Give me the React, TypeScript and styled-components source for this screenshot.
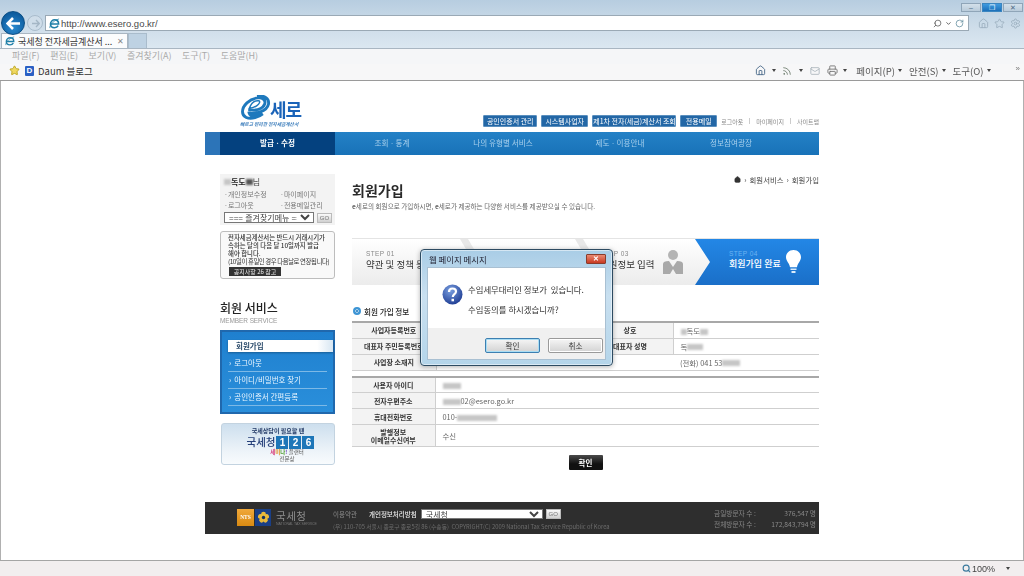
import React from 'react';
import styled, { createGlobalStyle } from 'styled-components';
import { Home, Star, Settings, Search, RotateCw, ChevronDown, Rss, Mail, Printer } from 'lucide-react';

const KR = '"Noto Sans CJK KR", "Liberation Sans", sans-serif';

const Global = createGlobalStyle`
  html, body { margin: 0; padding: 0; background: #fff; overflow: hidden; }
  * { box-sizing: border-box; }
  body { font-family: ${KR}; }
`;

const Frame = styled.div`
  width: 1024px; height: 576px; display: flex; flex-direction: column; overflow: hidden;
  filter: blur(0.3px);
`;

/* ---------- browser chrome ---------- */
const TopArea = styled.div`
  height: 49px; flex: none; display: flex; flex-direction: column;
  background: linear-gradient(#b7cde0, #cfdeea 60%, #dbe7f1);
  border-bottom: 1px solid #a9b6c2;
`;
const WindowRow = styled.div`
  height: 14px; padding: 3px 1px 0 0; display: flex; justify-content: flex-end; gap: 1px;
`;
const WinBtn = styled.div<{ $kind?: 'max' | 'plain' }>`
  width: 20px; height: 9px; border: 1px solid #8fa5b8; font: 7px/7px "Liberation Sans", sans-serif; text-align: center;
  color: ${p => (p.$kind === 'max' ? '#e6f3fc' : '#4d6b85')};
  background: ${p => (p.$kind === 'max' ? 'linear-gradient(#3f9be0, #1b6fb9)' : 'linear-gradient(#d3e0ea, #b9cbda)')};
  border-color: ${p => (p.$kind === 'max' ? '#3a85c0' : '#8fa5b8')};
`;
const NavRow = styled.div`
  height: 20px; display: flex; align-items: center; padding-left: 1px; position: relative; z-index: 2;
`;
const BackBtn = styled.div`
  width: 24px; height: 24px; border-radius: 50%; flex: none; display: flex; align-items: center; justify-content: center;
  background: radial-gradient(circle at 50% 70%, #2a8ad0, #0d5c9e 75%);
  border: 1px solid #0c4f85;
`;
const ForwardBtn = styled.div`
  width: 16px; height: 16px; border-radius: 50%; margin-left: 2px; flex: none; display: flex; align-items: center; justify-content: center;
  background: #cfdde9; border: 1px solid #a9bccc;
`;
const AddressBox = styled.div`
  width: 924px; height: 16px; margin-left: 2px; flex: none; display: flex; align-items: center; padding: 0 4px 0 3px;
  background: #fff; border: 1px solid #9aa9b5;
`;
const Url = styled.span`
  font: 9.5px "Liberation Sans", sans-serif; color: #4a4a4a; margin-left: 1px; flex: 1;
`;
const AddressTools = styled.div`
  display: flex; align-items: center; gap: 3px; color: #555;
`;
const ToolIcons = styled.div`
  display: flex; align-items: center; gap: 5px; margin-left: 9px; color: #9db0bf;
`;
const TabRow = styled.div`
  height: 15px; display: flex; align-items: flex-end; padding-left: 1px;
`;
const Tab = styled.div`
  width: 127px; height: 15px; background: #fbfcfd; border: 1px solid #a9b6c2; border-bottom: none; display: flex; align-items: center; padding: 0 3px;
  font-size: 9px; color: #333; white-space: nowrap;
`;
const TabLabel = styled.span` margin-left: 3px; flex: 1; `;
const TabClose = styled.span` color: #888; font: 8px "Liberation Sans", sans-serif; `;
const NewTab = styled.div`
  width: 19px; height: 15px; background: #bed2e3; border: 1px solid #a9bccc; border-bottom: none;
`;
const MenuRow = styled.div`
  height: 15px; flex: none; background: #f5f6f8; display: flex; align-items: center; padding: 0 0 2px 12px; gap: 10.5px;
  font-size: 9px; color: #a9a9a9; white-space: nowrap;
`;
const FavRow = styled.div`
  height: 17px; flex: none; background: #f7f7f8; display: flex; align-items: center; padding: 0 4px 3px 9px;
  font-size: 9.5px; color: #333; border-bottom: 1px solid #9a9a9a; white-space: nowrap;
`;
const FavBadge = styled.span`
  width: 9px; height: 10px; margin-left: 5px; margin-right: 4px; background: #2a5fc4; color: #fff; border-radius: 1px;
  font: bold 8px/10px "Liberation Sans", sans-serif; text-align: center; flex: none;
`;
const FavTools = styled.div`
  margin-left: auto; display: flex; align-items: center; color: #555;
`;
const Caret = styled.span<{ $gap?: number }>`
  width: 0; height: 0; border: 2.5px solid transparent; border-top: 3px solid #444; border-bottom: none;
  margin: 0 ${p => p.$gap ?? 6}px 0 ${p => p.$gap ?? 6}px;
`;
const ToolText = styled.span` margin-left: 4px; `;
const More = styled.span` margin-left: 22px; margin-bottom: 4px; font: 8px "Liberation Sans", sans-serif; color: #777; `;

const Viewport = styled.div`
  flex: 1; min-height: 0; overflow: hidden; background: #fff; border-left: 1px solid #b0b0b0; border-right: 1px solid #b0b0b0; position: relative;
`;

const StatusBar = styled.div`
  height: 16px; flex: none; background: #f2eeef; border-top: 1px solid #a5a5a5; display: flex; align-items: center; justify-content: flex-end;
  padding-right: 3px; font: 9px "Liberation Sans", sans-serif; color: #444;
`;
const StatusIcon = styled.span` color: #3b7a9e; display: flex; margin-right: 1px; `;

/* ---------- site ---------- */
const Site = styled.div`
  width: 614px; margin: 0 auto; display: flex; flex-direction: column;
`;
const Header = styled.header`
  height: 51px; display: flex; align-items: flex-end; justify-content: space-between; padding: 0 0 5px 35px;
`;
const Logo = styled.div`
  width: 63px; height: 33px; display: flex; flex-direction: column; margin-bottom: -1px;
`;
const LogoTop = styled.div` display: flex; align-items: flex-end; height: 26px; `;
const LogoName = styled.span`
  font-family: "Liberation Sans", "Noto Sans CJK KR", sans-serif;
  font-size: 18px; font-weight: 700; line-height: 19px; color: #1a63b8; letter-spacing: -1px; margin-left: -1px;
`;
const LogoSub = styled.span`
  font-size: 4.7px; font-weight: 700; font-style: italic; color: #3a7cbb; white-space: nowrap; line-height: 7px;
`;
const HeaderRight = styled.div` display: flex; align-items: center; `;
const UtilBtn = styled.span<{ $w: number }>`
  width: ${p => p.$w}px; height: 12px; background: #2367a6; border: 1px solid #5a8fbe; border-radius: 1px; margin-right: 4px;
  font-size: 7px; line-height: 10px; color: #fff; text-align: center; white-space: nowrap;
`;
const UtilLink = styled.span`
  font-size: 6px; color: #8a8a8a; white-space: nowrap;
`;
const UtilSep = styled.span` width: 1px; height: 6px; background: #ccc; margin: 0 6px; `;

const Nav = styled.nav`
  height: 23px; display: flex; background: linear-gradient(#2481c6, #1872b8); padding-left: 15px;
  box-shadow: inset 15px 0 0 #2c74b8;
`;
const NavItem = styled.div<{ $w: number; $active?: boolean }>`
  width: ${p => p.$w}px; text-align: center; font-size: 7.6px; line-height: 22px; white-space: nowrap;
  color: ${p => (p.$active ? '#fff' : '#a8d0ec')};
  font-weight: ${p => (p.$active ? 700 : 400)};
  background: ${p => (p.$active ? '#04417f' : 'transparent')};
`;
const Body = styled.div`
  height: 347px; display: flex; padding: 19px 0 0 15px; gap: 17px;
`;
const Side = styled.aside` width: 115px; flex: none; display: flex; flex-direction: column; `;
const UserBox = styled.div`
  height: 51px; background: #f3f3f3; padding: 3px 3px 0 4px; font-size: 7px; color: #777;
`;
const UserName = styled.div` font-size: 8px; line-height: 10px; color: #444; display: flex; align-items: center; `;
const Blur = styled.span<{ $w: number; $dark?: boolean }>`
  display: inline-block; width: ${p => p.$w}px; height: 6px; background: ${p => (p.$dark ? '#555' : '#c6c6c6')}; filter: blur(1.3px); vertical-align: middle;
`;
const BoldName = styled.b` color: #222; font-size: 8px; `;
const UserLinks = styled.div`
  display: grid; grid-template-columns: 56px 1fr; row-gap: 0; line-height: 11px; margin-top: 2px; white-space: nowrap;
`;
const SelectRow = styled.div` display: flex; align-items: center; gap: 3px; margin-top: 1px; `;
const FavSelect = styled.select<{ $w: number; $h?: number }>`
  width: ${p => p.$w}px; height: ${p => p.$h ?? 11}px; padding: 0; border: 1px solid #777; border-radius: 0; background: #fff;
  font: 8px/9px "Liberation Sans", "Noto Sans CJK KR", sans-serif; color: #444; outline: none;
`;
const GoBtn = styled.span`
  width: 15px; height: 10px; background: linear-gradient(#fafafa, #d0d0d0); border: 1px solid #bbb; font: 6px/8px "Liberation Sans", sans-serif; color: #777; text-align: center; flex: none;
`;
const FooterGo = styled(GoBtn)` margin-left: 3px; `;
const Notice = styled.div`
  height: 48px; margin-top: 6px; border: 1px solid #bdbdbd; border-radius: 3px; background: #f9f9f9; padding: 2px 0 0 7px;
  font-size: 6.4px; line-height: 8px; color: #333; white-space: nowrap;
`;
const NoticeBold = styled.div` font-weight: 500; `;
const NoticeFine = styled.div` letter-spacing: -0.42px; `;
const NoticeTag = styled.span`
  display: block; width: 52px; height: 9px; margin: 1px 0 0 1px; background: #333; color: #eee; font-size: 6px; line-height: 9px; text-align: center;
`;
const SideTitle = styled.h2`
  margin: 21px 0 0; font-size: 12px; line-height: 15px; font-weight: 500; color: #222;
`;
const SideSub = styled.div`
  font: 6.5px/9px "Liberation Sans", sans-serif; color: #999; margin-top: 1px; letter-spacing: -0.1px;
`;
const SideMenu = styled.div`
  height: 84px; margin-top: 5px; background: linear-gradient(#1f80cf, #2a8fdb); border: 2px solid #2068ad; padding: 8px 0 0 6px; display: flex; flex-direction: column;
`;
const SideActive = styled.div`
  height: 12px; background: linear-gradient(90deg, #fff 85%, #d7e6f2); padding-left: 8px; font-size: 7.5px; font-weight: 700; line-height: 12px; color: #2a4a6a; margin-bottom: 3px; box-shadow: 0 1px 2px rgba(0,0,0,.3);
`;
const SideItem = styled.div`
  height: 17px; margin-right: 6px; padding-left: 1px; border-bottom: 1px solid #7db9e6; font-size: 7.5px; line-height: 16px; color: #eaf6ff; white-space: nowrap;
  display: flex; gap: 3px;
`;
const Banner = styled.div`
  height: 42px; margin-top: 9px; margin-left: 1px; border-radius: 3px; border: 1px solid #c3d3e0; background: linear-gradient(#cddfee, #eef4f9 70%, #f8fbfd); display: flex; flex-direction: column; align-items: center; padding-top: 3px;
`;
const BannerLead = styled.div` font-size: 6px; font-weight: 700; line-height: 8px; color: #233a66; `;
const BannerMain = styled.div` display: flex; align-items: center; font-size: 10.5px; line-height: 14px; color: #26407a; font-weight: 500; margin-left: 5px; `;
const Digit = styled.span`
  width: 12px; height: 13px; margin-left: 1px; background: #1d76b8; color: #fff; font: bold 10px/13px "Liberation Sans", sans-serif; text-align: center;
`;
const Rainbow = styled.div` font-size: 5.5px; line-height: 7px; color: #555; margin-left: 18px; `;
const Tint = styled.b<{ $c: string }>` color: ${p => p.$c}; `;

const Main = styled.main` width: 467px; flex: none; display: flex; flex-direction: column; `;
const TitleRow = styled.div` height: 64px; display: flex; justify-content: space-between; flex: none; `;
const H1 = styled.h1` margin: 6px 0 0; font-size: 14px; line-height: 20px; font-weight: 700; color: #2a2a2a; `;
const Desc = styled.p` margin: 2px 0 0; font-size: 6.6px; line-height: 9px; color: #666; white-space: nowrap; `;
const Crumbs = styled.div` display: flex; align-items: center; height: 10px; font-size: 7.4px; color: #444; gap: 3px; white-space: nowrap; `;
const Steps = styled.div`
  height: 47px; flex: none; display: flex; background: linear-gradient(#ffffff, #f7f7f7 40%, #ececec); border-top: 1px solid #e4e4e4;
`;
const Step = styled.div<{ $w: number; $pad: number }>`
  width: ${p => p.$w}px; padding-left: ${p => p.$pad}px; position: relative; display: flex; align-items: center; gap: 8px;
`;
const Chevron = styled.svg`
  position: absolute; left: -5px; top: 0; width: 22px; height: 47px;
`;
const StepLabel = styled.div` font: 6.5px/9px "Liberation Sans", sans-serif; letter-spacing: .4px; color: #888; `;
const StepTitle = styled.div` font-size: 9.5px; line-height: 12px; color: #333; white-space: nowrap; `;
const StepText = styled.div` margin-bottom: 5px; `;
const StepDone = styled.div`
  flex: 1; padding-left: 34px; display: flex; align-items: center; gap: 5px;
  background: linear-gradient(#2387e6, #1a6fc8);
  clip-path: polygon(0 0, 100% 0, 100% 100%, 0 100%, 15px 50%);
`;
const DoneLabel = styled(StepLabel)` color: #6db4f2; `;
const DoneTitle = styled.div` font-size: 9px; font-weight: 500; line-height: 12px; color: #fff; white-space: nowrap; `;
const SectionHead = styled.div`
  display: flex; align-items: center; gap: 3px; margin-top: 21px; height: 10px; padding-left: 1px; font-size: 7.6px; font-weight: 500; color: #222;
`;
const SectionDot = styled.span`
  width: 8px; height: 8px; border-radius: 50%; background: #1775bd; border: 2px solid #3d95d5; box-shadow: inset 0 0 0 1px #cfe6f7;
`;
const Table = styled.table<{ $mt: number }>`
  width: 467px; margin-top: ${p => p.$mt}px; border-collapse: collapse; table-layout: fixed; border-top: 2px solid #a8a8a8; font-size: 7.4px;
`;
const Th = styled.th<{ $w?: number; $h?: number }>`
  width: ${p => (p.$w ? `${p.$w}px` : 'auto')}; height: ${p => p.$h ?? 16}px; padding: 0; background: #f3f3f3; font-weight: 700; font-size: 7px; line-height: 8px; color: #333; text-align: center;
  border-bottom: 1px solid #cfcfcf; border-right: 1px solid #cfcfcf;
`;
const Td = styled.td<{ $w?: number; $open?: boolean }>`
  ${p => (p.$w ? `width: ${p.$w}px;` : '')} height: 16px; padding: 0 0 0 7px; color: #666; white-space: nowrap;
  border-bottom: 1px solid #cfcfcf;
  ${p => (p.$open ? '' : 'border-right: 1px solid #cfcfcf;')}
  &:last-child { border-right: none; }
`;
const Confirm = styled.div`
  width: 34px; height: 15px; margin: 8px auto 0; background: linear-gradient(#4a4a4a, #111 60%); border-radius: 1px; color: #fff; font-size: 7.5px; font-weight: 700; line-height: 15px; text-align: center;
`;
const Footer = styled.footer`
  height: 32px; background: #2e2e2e; display: flex; padding: 7px 0 0 32px; color: #8a8a8a;
`;
const Nts = styled.span`
  width: 17px; height: 17px; background: linear-gradient(#f0a83a, #d98a12); color: #fff; font: bold 5.5px/17px "Liberation Serif", serif; text-align: center; flex: none;
`;
const NtsMark = styled.span`
  width: 16px; height: 17px; margin-left: 1px; background: #1a3f86; display: flex; align-items: center; justify-content: center; flex: none;
`;
const FooterOrg = styled.div`
  margin-left: 5px; width: 57px; flex: none;
`;
const OrgName = styled.div` font-size: 10.5px; line-height: 12px; letter-spacing: .5px; color: #8f8f8f; margin-top: 1px; `;
const OrgSub = styled.div` font: 3.5px/5px "Liberation Sans", sans-serif; color: #777; white-space: nowrap; `;
const FooterMid = styled.div` width: 381px; flex: none; font-size: 6.5px; white-space: nowrap; `;
const PolicyRow = styled.div` display: flex; align-items: center; height: 10px; margin-top: 0; `;
const Policy = styled.b` color: #eee; margin: 0 4px 0 12px; font-weight: 500; `;
const CopyRow = styled.div` font-size: 5.8px; line-height: 9px; margin-top: 3px; color: #6d6d6d; `;
const FooterStats = styled.div`
  flex: 1; font-size: 6.7px; line-height: 11px; padding: 0 3px 0 0; margin-top: -1px; color: #888; display: grid; grid-template-columns: auto 1fr; white-space: nowrap; align-content: start;
`;
const StatValue = styled.span` text-align: right; `;

/* ---------- dialog ---------- */
const Dialog = styled.div`
  position: absolute; left: 419px; top: 168px; width: 193px; height: 117px; z-index: 5; display: flex; flex-direction: column;
  padding: 0 6px 5px; background: linear-gradient(#a9cde6, #c9e0f0 40%, #b4d5ea); border: 1px solid #2d4b62; border-radius: 4px;
  box-shadow: 0 0 0 1px rgba(255,255,255,.5) inset, 0 1px 5px rgba(0,0,0,.3);
`;
const DialogHead = styled.div`
  height: 17px; flex: none; display: flex; align-items: center; justify-content: space-between; padding-left: 2px; font-size: 8.4px; color: #223;
`;
const DialogX = styled.div`
  width: 20px; height: 10px; border-radius: 1px; background: linear-gradient(#e98a72, #c93a22); border: 1px solid #8a3c2c; color: #fff; font: bold 7px/8px "Liberation Sans", sans-serif; text-align: center; margin-top: 1px;
`;
const DialogBody = styled.div` flex: 1; background: #fff; display: flex; flex-direction: column; border: 1px solid #a9c0d2; `;
const DialogMain = styled.div` flex: 1; display: flex; padding: 16px 0 0 14px; gap: 5px; `;
const DialogText = styled.div` font-size: 8.4px; line-height: 20px; color: #333; margin-top: -5px; white-space: pre; `;
const DialogFoot = styled.div`
  height: 31px; flex: none; background: #f0f0f0; display: flex; justify-content: flex-end; align-items: flex-start; gap: 8px; padding: 10px 2px 0 0;
`;
const DialogBtn = styled.div<{ $primary?: boolean }>`
  width: 55px; height: 15px; border-radius: 2px; font-size: 7.6px; line-height: 13px; text-align: center; color: #333;
  border: 1px solid ${p => (p.$primary ? '#3c7fb1' : '#9a9a9a')};
  background: linear-gradient(#f6f6f6, #e4e4e4 50%, #d3d3d3);
  box-shadow: ${p => (p.$primary ? 'inset 0 0 0 1px #a9ddf4' : 'inset 0 0 0 1px #fff')};
`;

const IeIcon = ({ size = 11 }: { size?: number }) => (
  <svg width={size} height={size} viewBox="0 0 12 12" style={{ flex: 'none' }}>
    <path d="M1.5 6.5h9c0-3-2-4.5-4.3-4.5S1.6 4 1.6 6.6 3.6 10.6 6 10.6c1.8 0 3.3-.8 4-2.2" fill="none" stroke="#1f7fa8" strokeWidth="1.7" />
    <path d="M1 11c-1-2 3-8 10-10" fill="none" stroke="#1f7fa8" strokeWidth=".8" />
  </svg>
);

const PersonIcon = () => (
  <svg width="20" height="24" viewBox="0 0 20 24" style={{ flex: 'none' }}>
    <circle cx="10" cy="5" r="5" fill="#b4b4b4" />
    <path d="M0 24V14c0-2 2-3 6-3l4 6 4-6c4 0 6 1 6 3v10H13l-3-5-3 5z" fill="#a9a9a9" />
  </svg>
);

const BulbIcon = () => (
  <svg width="15" height="24" viewBox="0 0 15 24" style={{ flex: 'none' }}>
    <path d="M7.500 0C3 0 0 3.300 0 7.200c0 3.800 3.500 6 4 10h7c.5-4 4-6.200 4-10C15 3.300 12 0 7.500 0z" fill="#fff" />
    <path d="M4.500 18.500h6v1.500h-6zM5.500 21h4v2h-4z" fill="#dcecfa" />
  </svg>
);

const StepChevron = () => (
  <Chevron viewBox="0 0 22 47">
    <path d="M0 0h8l14 23.500L8 47H0l14-23.500z" fill="#e0e0e0" opacity=".75" />
  </Chevron>
);

const Flower = () => (
  <svg width="13" height="13" viewBox="0 0 14 14">
    {[0, 72, 144, 216, 288].map(a => (
      <circle key={a} cx="7" cy="3.500" r="2.600" fill="#e9b93a" transform={`rotate(${a} 7 7)`} />
    ))}
    <circle cx="7" cy="7" r="1.800" fill="#12305f" />
  </svg>
);

export default function App() {
  return (
    <Frame>
      <Global />
      <TopArea>
        <WindowRow>
          <WinBtn>–</WinBtn>
          <WinBtn $kind="max">❐</WinBtn>
          <WinBtn>✕</WinBtn>
        </WindowRow>
        <NavRow>
          <BackBtn>
            <svg width="15" height="13" viewBox="0 0 15 13">
              <path d="M7 1L1.500 6.500 7 12M2 6.500h12" fill="none" stroke="#fff" strokeWidth="2.600" />
            </svg>
          </BackBtn>
          <ForwardBtn>
            <svg width="9" height="9" viewBox="0 0 9 9">
              <path d="M5 1l3.300 3.500L5 8M8 4.500H1" fill="none" stroke="#a4b6c5" strokeWidth="1.300" />
            </svg>
          </ForwardBtn>
          <AddressBox>
            <IeIcon />
            <Url>http://www.esero.go.kr/</Url>
            <AddressTools>
              <Search size={9} strokeWidth={2} style={{ transform: 'scaleX(-1)' }} />
              <ChevronDown size={7} strokeWidth={3} />
              <RotateCw size={9} strokeWidth={2} color="#5d8a9b" />
            </AddressTools>
          </AddressBox>
          <ToolIcons>
            <Home size={11} />
            <Star size={11} />
            <Settings size={11} />
          </ToolIcons>
        </NavRow>
        <TabRow>
          <Tab>
            <IeIcon size={10} />
            <TabLabel>국세청 전자세금계산서 ...</TabLabel>
            <TabClose>✕</TabClose>
          </Tab>
          <NewTab />
        </TabRow>
      </TopArea>
      <MenuRow>
        <span>파일(F)</span>
        <span>편집(E)</span>
        <span>보기(V)</span>
        <span>즐겨찾기(A)</span>
        <span>도구(T)</span>
        <span>도움말(H)</span>
      </MenuRow>
      <FavRow>
        <Star size={11} color="#b8a21c" fill="#f0d860" />
        <FavBadge>D</FavBadge>
        <span>Daum 블로그</span>
        <FavTools>
          <Home size={11} color="#4a6a8a" />
          <Caret />
          <Rss size={10} color="#6a7a6a" />
          <Caret $gap={7} />
          <Mail size={10} color="#a9b3bb" />
          <Printer size={11} color="#777" style={{ marginLeft: 7 }} />
          <Caret $gap={5} />
          <ToolText>페이지(P)</ToolText>
          <Caret $gap={3} />
          <ToolText>안전(S)</ToolText>
          <Caret $gap={3} />
          <ToolText>도구(O)</ToolText>
          <Caret $gap={3} />
          <More>»</More>
        </FavTools>
      </FavRow>
      <Viewport>
        <Site>
          <Header>
            <Logo>
              <LogoTop>
                <svg width="31" height="26" viewBox="0 0 31 27" style={{ flex: 'none' }}>
                  <path d="M8 15.500c8 1 15-1 17-6 1.500-4-2-7-7-6.500C9 4 2 11 2 17.500c0 5.500 6 8 13 6 3-.9 6-2.300 8-4-5 2.500-13 3.500-14-.5 6 .5 18-1 20-9.500 1-6-5-9.500-12-8.500" fill="none" stroke="#1e79bd" strokeWidth="3" />
                  <path d="M9 14c2-6 6-8.500 10-8 1.500.5 1 3-2 5-2 1.500-5 2.500-8 3z" fill="#fff" stroke="#1e79bd" strokeWidth="1.500" />
                </svg>
                <LogoName>세로</LogoName>
              </LogoTop>
              <LogoSub>빠르고 편리한 전자세금계산서</LogoSub>
            </Logo>
            <HeaderRight>
              <UtilBtn $w={54}>공인인증서 관리</UtilBtn>
              <UtilBtn $w={47}>시스템사업자</UtilBtn>
              <UtilBtn $w={84}>제1차 전자(세금)계산서 조회</UtilBtn>
              <UtilBtn $w={37}>전용메일</UtilBtn>
              <UtilLink>로그아웃</UtilLink>
              <UtilSep />
              <UtilLink>마이페이지</UtilLink>
              <UtilSep />
              <UtilLink>사이트맵</UtilLink>
            </HeaderRight>
          </Header>
          <Nav>
            <NavItem $w={115} $active>발급ㆍ수정</NavItem>
            <NavItem $w={114}>조회ㆍ통계</NavItem>
            <NavItem $w={108}>나의 유형별 서비스</NavItem>
            <NavItem $w={126}>제도ㆍ이용안내</NavItem>
            <NavItem $w={96}>정보참여광장</NavItem>
          </Nav>
          <Body>
            <Side>
              <UserBox>
                <UserName>
                  <Blur $w={7} />
                  <BoldName>독도</BoldName>
                  <Blur $w={7} $dark />
                  <span>님</span>
                </UserName>
                <UserLinks>
                  <span>·개인정보수정</span>
                  <span>·마이페이지</span>
                  <span>·로그아웃</span>
                  <span>·전용메일관리</span>
                </UserLinks>
                <SelectRow>
                  <FavSelect $w={90} defaultValue="a">
                    <option value="a">=== 즐겨찾기메뉴 ===</option>
                  </FavSelect>
                  <GoBtn>GO</GoBtn>
                </SelectRow>
              </UserBox>
              <Notice>
                <NoticeBold>전자세금계산서는 반드시 거래시기가</NoticeBold>
                <NoticeBold>속하는 달의 다음 달 10일까지 발급</NoticeBold>
                <NoticeBold>해야 합니다.</NoticeBold>
                <NoticeFine>(10일이 휴일인 경우 다음날로 연장됩니다)</NoticeFine>
                <NoticeTag>공지사항 26 참고</NoticeTag>
              </Notice>
              <SideTitle>회원 서비스</SideTitle>
              <SideSub>MEMBER SERVICE</SideSub>
              <SideMenu>
                <SideActive>회원가입</SideActive>
                <SideItem><span>›</span><span>로그아웃</span></SideItem>
                <SideItem><span>›</span><span>아이디/비밀번호 찾기</span></SideItem>
                <SideItem><span>›</span><span>공인인증서 간편등록</span></SideItem>
              </SideMenu>
              <Banner>
                <BannerLead>국세상담이 필요할 땐</BannerLead>
                <BannerMain>
                  국세청
                  <Digit>1</Digit>
                  <Digit>2</Digit>
                  <Digit>6</Digit>
                </BannerMain>
                <Rainbow>
                  <Tint $c="#d63a7a">세</Tint>
                  <Tint $c="#e08a1c">미</Tint>
                  <Tint $c="#4a9a2a">나</Tint>
                  <Tint $c="#6a3ac0">!</Tint> 플랜터
                </Rainbow>
                <Rainbow>전문상</Rainbow>
              </Banner>
            </Side>
            <Main>
              <TitleRow>
                <div>
                  <H1>회원가입</H1>
                  <Desc>
                    <b>e</b>세로의 회원으로 가입하시면, <b>e</b>세로가 제공하는 다양한 서비스를 제공받으실 수 있습니다.
                  </Desc>
                </div>
                <Crumbs>
                  <Home size={7} fill="#333" color="#333" />
                  <span>›</span>
                  <span>회원서비스</span>
                  <span>›</span>
                  <span>회원가입</span>
                </Crumbs>
              </TitleRow>
              <Steps>
                <Step $w={113} $pad={14}>
                  <StepText>
                    <StepLabel>STEP 01</StepLabel>
                    <StepTitle>약관 및 정책 동의</StepTitle>
                  </StepText>
                </Step>
                <Step $w={115} $pad={20}>
                  <StepChevron />
                  <StepText>
                    <StepLabel>STEP 02</StepLabel>
                    <StepTitle>본인 확인</StepTitle>
                  </StepText>
                </Step>
                <Step $w={115} $pad={20}>
                  <StepChevron />
                  <StepText>
                    <StepLabel>STEP 03</StepLabel>
                    <StepTitle>회원정보 입력</StepTitle>
                  </StepText>
                  <PersonIcon />
                </Step>
                <StepDone>
                  <StepText>
                    <DoneLabel>STEP 04</DoneLabel>
                    <DoneTitle>회원가입 완료</DoneTitle>
                  </StepText>
                  <BulbIcon />
                </StepDone>
              </Steps>
              <SectionHead>
                <SectionDot />
                회원 가입 정보
              </SectionHead>
              <Table $mt={5}>
                <tbody>
                  <tr>
                    <Th $w={84}>사업자등록번호</Th>
                    <Td $w={151} />
                    <Th $w={86}>상호</Th>
                    <Td $w={146}>
                      <Blur $w={6} />독도<Blur $w={8} />
                    </Td>
                  </tr>
                  <tr>
                    <Th>대표자 주민등록번호</Th>
                    <Td />
                    <Th>대표자 성명</Th>
                    <Td>
                      독<Blur $w={16} />
                    </Td>
                  </tr>
                  <tr>
                    <Th>사업장 소재지</Th>
                    <Td colSpan={2} $open />
                    <Td>
                      (전화) 041 53<Blur $w={18} />
                    </Td>
                  </tr>
                </tbody>
              </Table>
              <Table $mt={5}>
                <tbody>
                  <tr>
                    <Th $w={83}>사용자 아이디</Th>
                    <Td>
                      <Blur $w={18} />
                    </Td>
                  </tr>
                  <tr>
                    <Th>전자우편주소</Th>
                    <Td>
                      <Blur $w={18} />
                      02@esero.go.kr
                    </Td>
                  </tr>
                  <tr>
                    <Th>휴대전화번호</Th>
                    <Td>
                      010-
                      <Blur $w={40} />
                    </Td>
                  </tr>
                  <tr>
                    <Th $h={22}>
                      발행정보
                      <br />
                      이메일수신여부
                    </Th>
                    <Td>수신</Td>
                  </tr>
                </tbody>
              </Table>
              <Confirm>확인</Confirm>
            </Main>
          </Body>
          <Footer>
            <Nts>NTS</Nts>
            <NtsMark>
              <Flower />
            </NtsMark>
            <FooterOrg>
              <OrgName>국세청</OrgName>
              <OrgSub>NATIONAL TAX SERVICE</OrgSub>
            </FooterOrg>
            <FooterMid>
              <PolicyRow>
                <span>이용약관</span>
                <Policy>개인정보처리방침</Policy>
                <FavSelect $w={122} $h={10} defaultValue="a">
                  <option value="a">국세청</option>
                </FavSelect>
                <FooterGo>GO</FooterGo>
              </PolicyRow>
              <CopyRow>(우) 110-705 서울시 종로구 종로5길 86 (수송동) &nbsp;COPYRIGHT(C) 2009 National Tax Service Republic of Korea</CopyRow>
            </FooterMid>
            <FooterStats>
              <span>금일방문자 수 :</span>
              <StatValue>376,547 명</StatValue>
              <span>전체방문자 수 :</span>
              <StatValue>172,843,794 명</StatValue>
            </FooterStats>
          </Footer>
        </Site>
        <Dialog>
          <DialogHead>
            <span>웹 페이지 메시지</span>
            <DialogX>✕</DialogX>
          </DialogHead>
          <DialogBody>
            <DialogMain>
              <svg width="21" height="21" viewBox="0 0 21 21" style={{ flex: 'none' }}>
                <defs>
                  <radialGradient id="q" cx=".4" cy=".3" r=".8">
                    <stop offset="0" stopColor="#7a9fe0" />
                    <stop offset="1" stopColor="#16348c" />
                  </radialGradient>
                </defs>
                <circle cx="10.500" cy="10.500" r="10" fill="url(#q)" />
                <path d="M7 8c0-2.500 1.500-3.500 3.500-3.500s3.500 1 3.500 3c0 2.800-3.200 2.600-3.200 5.500" fill="none" stroke="#fff" strokeWidth="2.200" />
                <rect x="9.500" y="14.800" width="2.500" height="2.500" fill="#fff" />
              </svg>
              <DialogText>
                {'수임세무대리인 정보가  있습니다.\n수임동의를 하시겠습니까?'}
              </DialogText>
            </DialogMain>
            <DialogFoot>
              <DialogBtn $primary>확인</DialogBtn>
              <DialogBtn>취소</DialogBtn>
            </DialogFoot>
          </DialogBody>
        </Dialog>
      </Viewport>
      <StatusBar>
        <StatusIcon>
          <Search size={9} strokeWidth={3} />
        </StatusIcon>
        <span>100%</span>
        <Caret $gap={11} />
      </StatusBar>
    </Frame>
  );
}
